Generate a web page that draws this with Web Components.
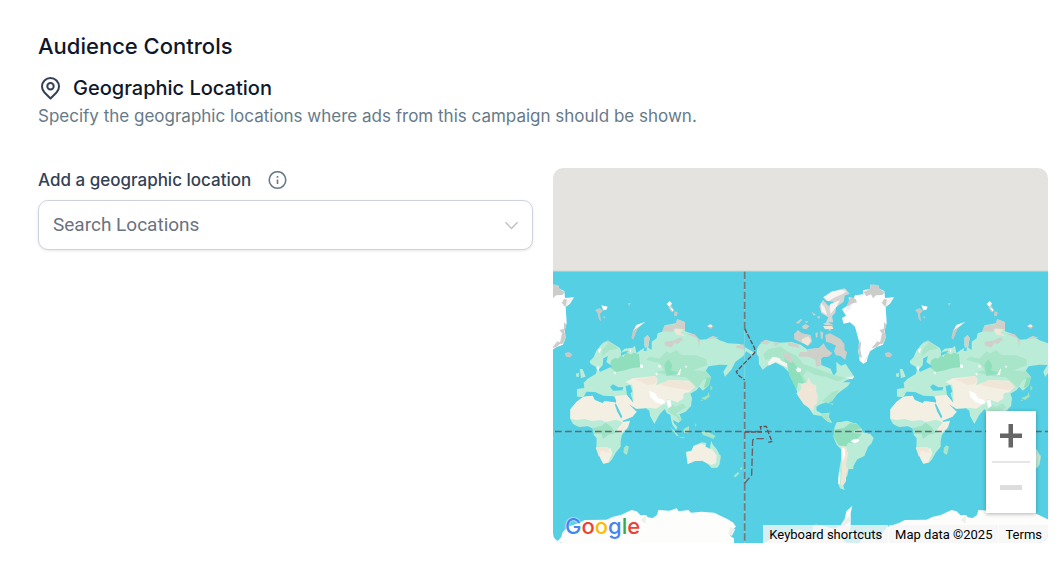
<!DOCTYPE html>
<html lang="en">
<head>
<meta charset="utf-8">
<meta name="viewport" content="width=device-width, initial-scale=1">
<title>Audience Controls</title>
<style>
body{margin:0;background:#fff;font-family:Inter,"Liberation Sans",sans-serif;color:#0f172a}
</style>
</head>
<body>
<audience-controls>
  <section-heading slot="heading">
    <span slot="title">Audience Controls</span>
    <span slot="subtitle">Geographic Location</span>
    <span slot="description">Specify the geographic locations where ads from this campaign should be shown.</span>
  </section-heading>
  <location-field slot="field" label="Add a geographic location" placeholder="Search Locations"></location-field>
  <world-map slot="map"></world-map>
</audience-controls>

<script>
const define = (name, html, setup) => {
  const template = document.createElement('template');
  template.innerHTML = html;
  customElements.define(name, class extends HTMLElement {
    constructor() {
      super();
      this.attachShadow({ mode: 'open' }).append(template.content.cloneNode(true));
    }
    connectedCallback() { if (setup) setup(this, this.shadowRoot); }
  });
};

define('audience-controls', `
<style>
:host{display:block;padding:32px 12px 18px 38px}
.columns{display:grid;grid-template-columns:minmax(0,1fr) minmax(0,1fr);gap:20px;margin-top:38px;align-items:start}
@media (max-width:640px){.columns{grid-template-columns:minmax(0,1fr)}}
</style>
<main><slot name="heading"></slot><div class="columns"><slot name="field"></slot><slot name="map"></slot></div></main>`);

define('section-heading', `
<style>
:host{display:block}
h2,h3,p{margin:0}
h2{font-size:22px;line-height:28px;font-weight:500}
h3{font-size:20px;line-height:28px;font-weight:500}
.row{display:flex;align-items:center;gap:10px;margin-top:14px}
svg{width:25px;height:25px;flex:none}
p{font-size:17px;line-height:28px;color:#667a88}
</style>
<h2><slot name="title"></slot></h2>
<div class="row">
<svg viewBox="0 0 25 25" fill="none" stroke="#334155" stroke-width="2" stroke-linejoin="round" aria-hidden="true"><path d="M12.5 22.500L6.500 16.500A8.500 8.500 0 0 1 4 10.500A8.500 8.500 0 0 1 21 10.500A8.500 8.500 0 0 1 18.500 16.500Z"/><circle cx="12.500" cy="10.200" r="3.200"/></svg>
<h3><slot name="subtitle"></slot></h3></div>
<p><slot name="description"></slot></p>`);

define('location-field', `
<style>
:host{display:block}
.label{display:flex;align-items:center;gap:16px;height:25px}
label{font-size:17px;line-height:25px;font-weight:500;color:#334155}
.info{border:0;background:none;padding:0;display:flex}
.info svg{width:20px;height:20px}
.box{display:flex;align-items:center;box-sizing:border-box;height:50px;margin-top:7px;padding:0 13px 0 14px;border:1px solid #cfd3de;border-radius:10px;box-shadow:0 1px 3px #0000001a;background:#fff}
input{flex:1;min-width:0;border:0;outline:0;padding:0;background:none;font:19px/28px Roboto,sans-serif;color:#334155}
input::placeholder{color:#6b7280;opacity:1}
.box svg{width:15px;height:15px;flex:none}
</style>
<div class="label"><label for="q"></label>
<button class="info" type="button" aria-label="More information"><svg viewBox="0 0 20 20" fill="none" stroke="#667a88" stroke-width="1.600"><circle cx="10.500" cy="9" r="8.300"/><path d="M10.500 8.500V13M10.500 5V6.800"/></svg></button></div>
<div class="box"><input id="q" type="text" role="combobox" aria-expanded="false" autocomplete="off">
<svg viewBox="0 0 15 15" fill="none" stroke="#bfbfbf" stroke-width="1.300" aria-hidden="true"><path d="M1.500 4.300L7.500 10.500L13.500 4.300"/></svg></div>`,
(host, root) => {
  root.querySelector('label').textContent = host.getAttribute('label');
  root.querySelector('input').placeholder = host.getAttribute('placeholder');
});

define('map-zoom', `
<style>
:host{display:block;width:50px;background:#fff;box-shadow:0 1px 4px #0000004d}
button{display:flex;align-items:center;justify-content:center;width:100%;height:50px;border:0;background:none;padding:0}
svg{width:24px;height:24px}
hr{margin:0 6px;border:0;height:2px;background:#e6e6e6}
</style>
<button type="button" aria-label="Zoom in"><svg viewBox="0 0 24 24" fill="#666"><path d="M9.500 0H14V9.500H23V14H14V23.500H9.500V14H1V9.500H9.500Z"/></svg></button>
<hr>
<button type="button" aria-label="Zoom out" disabled><svg viewBox="0 0 24 24" fill="#ddd"><path d="M1 9H23V14H1Z"/></svg></button>`);

define('map-credits', `
<style>
:host{display:flex;gap:1px;font:13px/16px Roboto,sans-serif;color:#000}
a,button,span{font:inherit;color:inherit;text-decoration:none;border:0;margin:0;padding:2px 6px 0;background:#f5f5f5cc;white-space:nowrap}
</style>
<button type="button">Keyboard shortcuts</button><span>Map data ©2025</span><a href="#terms">Terms</a>`);

define('world-map', `
<style>
:host{display:block;position:relative;height:375px;border-radius:10px;overflow:hidden;background:#e5e3df}
.map{display:block;width:100%;height:100%}
map-zoom{position:absolute;right:12px;bottom:30px}
map-credits{position:absolute;right:0;bottom:0}
.logo{position:absolute;left:12px;bottom:2px;font:500 22px/30px Inter,sans-serif;text-decoration:none;color:#4285f4;text-shadow:0 0 1px #fff,0 0 2px #fff}
.r{color:#ea4335}.y{color:#fbbc04}.g{color:#34a853}
</style>
<svg class="map" viewBox="0 -306 1485 1125" preserveAspectRatio="xMidYMid slice" role="img" aria-label="World map">
<defs>
<g id="world">
 <!-- Europe and Asia -->
 <path fill="#bbecd8" d="M72 380V357L94 354L92 339L104 326L128 312L132 300L128 290L113 282L110 274L122 262L130 242L143 226L150 219L166 212L180 221L201 234L205 247L214 236L239 233L246 227L250 249L263 240L274 234V203L284 195L290 203L286 233L296 240V215L311 205L314 190L328 185L335 166L369 160L373 148L396 156V184L422 193L440 209L461 208L478 199L500 211L525 220L561 222L580 234L602 247L598 256L580 244L571 258L547 276L536 298L516 320L511 305L524 285L500 284L467 289L458 302L474 321L468 345L450 362L438 350L431 360L412 371L417 384L414 408L398 425L379 433L386 448L376 459L361 450L362 459L373 471L369 480L357 462L352 435L342 430L335 417L320 433L304 462L291 437L289 422L278 415L250 416L228 403L232 412L251 425L238 440L208 452L186 405L190 392L183 379L151 377L126 366L100 365L91 381Z"/>
 <path fill="#a9e5c9" d="M290 260L320 266L340 244L352 250L370 240L385 255L430 256L460 268L462 285L420 301L458 304L474 322L450 330L435 354L400 322L350 317L308 306L335 301L320 280L280 270ZM150 236L168 217L198 235L170 241L145 260ZM370 430L400 412L390 400L368 410L350 400L345 425L370 440L380 456L386 448Z"/>
 <path fill="#8fdfbd" d="M170 292L174 272L186 263L196 266L203 257L212 261L218 246L235 254L240 248L258 252L262 292L238 294L219 300L190 306ZM334 285L346 268L358 286L354 301L378 310L340 318ZM461 323L474 322L465 350L452 354Z"/>
 <path fill="#54cfe4" d="M151 265L165 258L160 276L177 289L162 296L142 305L136 300L149 286ZM171 350L180 343L196 352L211 351L208 361L180 362ZM218 348L232 345L238 365L232 370L241 398L231 402L222 375ZM272 242L277 220L283 223L280 244ZM203 249L212 245L228 242L219 249L205 258Z"/>
 <path fill="#f4efe3" d="M217 336L240 325L306 318L314 327L310 346L350 330L407 332L425 351L409 367L392 370L390 386L374 397L345 388L335 400L310 416L288 413L250 416L228 403L251 425L238 440L208 452L186 405L190 392L185 378L222 375L241 398L241 370L238 346Z"/>
 <path fill="#f0e6d7" d="M245 329L305 318L314 327L305 342L285 346L265 336ZM320 344L350 329L414 337L425 352L408 361L380 357L350 351ZM363 176L392 174L382 190L400 199L368 193Z"/>
 <path fill="#d0d0cb" d="M328 184L334 167L367 163L373 147L396 157V178L365 175L360 185ZM333 216L364 211L382 202L390 208L375 221L364 220L355 233L336 226ZM276 234L275 203L284 195L290 206L284 231ZM144 221L165 211L174 220L160 216ZM460 208L481 197L498 205L480 205ZM396 190L424 192L440 209V232L432 205ZM550 227L571 222L576 239L549 233Z"/>
 <path fill="#fff" d="M288 363L306 369L315 384L332 390L338 400L325 403L307 396L292 380ZM340 392L352 389L356 408L346 415ZM262 282L270 286L269 295L261 292ZM316 284L326 289L318 294ZM372 316L384 293L381 315ZM131 291L139 289L136 305ZM135 241L145 233L140 250ZM229 240L235 238L233 248ZM307 309L313 308L312 318ZM395 289L403 287L399 294ZM181 306L188 307L187 314Z"/>
 <path fill="#bbecd8" d="M80 296L89 298L98 320L84 324ZM69 311L78 308L77 321L70 320Z"/>
 <path fill="#9fe2c2" d="M472 346L479 354L473 362ZM467 365L470 380L456 390L444 385L464 376ZM425 459L431 465L427 470ZM443 389L451 390L445 394Z"/>
 <path fill="#c8c9c6" d="M126 120L140 114L150 122L141 132L144 154L137 147L134 129ZM150 139L158 141L154 146ZM225 99L233 99L228 109ZM346 113L356 106L362 122L355 126ZM364 123L374 127L372 139L363 137ZM235 204L240 181L252 164L269 162L253 178L241 208L244 211ZM36 249L48 246L57 254L51 262L39 260ZM461 168L471 163L482 169L473 177Z"/>
 <path fill="#fff" d="M145 106L164 110L160 119L151 121ZM341 102L350 93L357 101L349 111ZM350 111L362 119L359 125ZM243 180L250 165L278 155L264 165ZM464 169L474 163L477 171Z"/>
 <!-- Africa and Indian Ocean -->
 <path fill="#bbecd8" d="M52 418L71 395L91 380L119 377L125 390L149 400L154 394L185 397L207 451L211 456L231 452L226 472L207 494L203 514L203 530L188 548L178 567L168 578L151 581L143 568L130 536L131 505L122 494L120 476L105 469L78 471L60 462L52 447Z"/>
 <path fill="#f4efe3" d="M52 418L71 395L91 380L119 377L125 390L149 400L154 394L185 397L207 451L211 456L231 452L222 475L202 489L192 480L209 457L190 449L158 456L145 450L117 453L95 447L73 450L52 446ZM128 533L147 532L151 541L172 534L178 550L166 577L151 581Z"/>
 <path fill="#f0e6d7" d="M129 532L164 531L170 549L145 542L137 560ZM198 487L216 462L206 485Z"/>
 <path fill="#9de3c3" d="M118 475L145 467L158 458L175 470L188 489L166 494L150 507L146 491L123 492Z"/>
 <path fill="#54cfe4" d="M185 402L190 403L208 440L204 445L193 425Z"/>
 <path fill="#a9e5c9" d="M213 533L220 526L228 530L222 554L215 552L211 546ZM351 470L365 482L378 499L370 497ZM391 478L408 468V487L394 490ZM445 486L464 485L487 497L482 507L470 502L450 495ZM376 501L397 502L390 505Z"/>
 <!-- Australia and New Zealand -->
 <path fill="#bbecd8" d="M398 546L415 542L422 527L446 517L460 519L457 529L471 536L474 512L480 524L491 538L502 558L500 583L493 593L476 594L465 583L448 572L426 573L404 582Z"/>
 <path fill="#f4efe3" d="M401 546L416 542L422 529L443 522L458 525L457 531L472 538L477 537L491 557L489 580L475 585L448 572L426 573L404 582Z"/>
 <path fill="#a9e5c9" d="M560 596L569 590L565 601ZM541 619L554 607L560 609L548 622ZM501 553L504 560L501 575Z"/>
 <!-- North America, Greenland and South America -->
 <g transform="translate(501 0)">
 <path fill="#bbecd8" d="M111 237L118 224L136 209L153 214L177 218L215 216L242 224L264 240L297 234L320 238L334 252L303 263L304 285L332 296L341 318L350 305L349 276L363 287L377 282L387 297L404 322L381 330L368 337L391 337L384 348L352 371L336 394L320 396L298 404L289 411L290 422L307 431L329 428L326 441L337 459L323 455L304 438L280 434L265 412L251 400L236 379L224 344L206 306L190 290L167 278L143 287L128 299L117 283L116 260L110 252Z"/>
 <path fill="#a9e5c9" d="M130 252L145 238L181 229L205 247L230 257L250 283L304 301L336 313L378 325L352 334L316 320L287 315L260 302L249 317L266 347L245 338L220 310L195 289L170 262L135 270ZM307 394L337 365L358 360L335 394ZM306 430L329 428L324 445L333 458L323 455L304 437Z"/>
 <path fill="#8fdfbd" d="M193 262L202 274L214 268L231 290L247 326L254 342L234 338L230 360L208 317L204 295L195 280Z"/>
 <path fill="#f0e6d7" d="M229 370L244 357L242 343L261 337L265 322L276 341L289 346L288 365L294 377L290 402L281 408L282 420L267 414L251 403L242 390ZM250 392L264 397L284 431L266 411Z"/>
 <path fill="#d0d0cb" d="M264 237L297 233L311 220L319 235L337 250L325 260L309 261L300 271L303 286L289 290L286 270L269 261L235 260L239 246L261 246ZM316 195L330 190L346 199L361 206L373 222L374 240L381 247L376 270L361 258L347 256L342 243L348 227L330 218L318 216ZM120 219L136 209L150 217L142 224ZM160 220L180 216L168 230ZM203 217L235 222L239 234L205 227ZM185 253L207 247L219 274L211 280L198 264ZM222 192L234 180L246 190L272 195L276 216L265 227L238 215L223 208ZM227 159L243 146L246 151L235 161ZM246 169L257 162L268 169L259 178L249 176ZM253 155L265 152L261 159ZM275 125L288 134L281 137ZM290 140L301 138L297 147ZM286 190L293 186V200L288 204ZM301 183L310 188L307 209L302 203ZM325 177L334 174L330 185ZM495 251L504 247L517 253L510 262L498 258Z"/>
 <path fill="#f0e6d7" d="M245 208L265 199L274 211L263 227L246 217ZM309 168L337 168L340 177L315 178Z"/>
 <path fill="#d5d6d3" d="M310 82L334 65L374 55L389 71L374 77L371 95L348 112L346 128L336 139L340 157L318 157L325 142L304 130L298 109L309 90L326 108L343 96L318 92ZM309 161L323 156L341 166L318 166Z"/>
 <path fill="#f5f5f3" d="M310 82L335 65L364 59L380 63L368 72L342 83L325 94ZM302 98L314 112L321 135L305 125ZM331 102L360 91L349 111L332 132L329 118ZM144 278L158 260L178 264L186 274L201 280L203 293L185 284L167 275L146 287ZM231 292L244 296L242 306L233 307L228 301ZM376 323L402 319L397 328ZM271 357L275 360L269 362Z"/>
 <path fill="#fff" d="M366 118L381 108L388 95L386 81L400 86L405 76L430 73L429 61L450 57L451 44L474 45L478 56L493 63L495 84L522 82L510 101L497 111L500 160L494 181L497 203L489 224L470 231L450 244L443 262L440 275L430 281L419 272L415 243L419 221L412 196L405 170L390 157L371 161L366 144L378 137Z"/>
 <path fill="#cccdca" d="M430 66L450 57L451 44L474 45L478 56L494 66L488 75L468 76L459 85L453 73L439 79ZM493 86L504 90L496 111L485 98ZM493 155L499 164L493 184L497 205L489 221L479 222L486 190L478 180L491 177ZM391 80L407 87L411 97L395 101L388 111L380 109ZM415 222L424 213L421 240L426 263L417 261ZM472 214L484 218L470 231L455 235Z"/>
 <path fill="#f0f0ee" d="M500 91L519 85L506 101L498 109ZM379 112L396 101L391 116L376 128ZM438 261L443 256L440 271L431 278Z"/>
 <path fill="#a9e5c9" d="M305 390L321 390L333 401L321 399ZM329 400L341 401L337 405Z"/>
 <path fill="#bbecd8" d="M343 474L350 457L362 456L381 452L401 459L409 460L425 476L428 487L451 492L461 504L455 520L444 531L433 558L412 568L400 589L400 597L386 597L382 617L372 631L369 645L374 660L360 655L354 639L357 602L363 569V538L350 524L340 500Z"/>
 <path fill="#8fdfbd" d="M343 479L372 474L391 459L412 462L424 476L405 480L402 489L426 491L415 504L398 519L385 518L377 530L355 525L341 500Z"/>
 <path fill="#f0e6d7" d="M365 528L378 530L384 550L378 587L384 597L378 615V634L367 650L362 642L366 610Z"/>
 <path fill="#fff" d="M367 534L374 536L375 555L368 576ZM357 605L361 608L360 640L354 642ZM391 515L400 508L415 507L418 513L406 520Z"/>
 </g>
 <!-- Antarctica -->
 <path fill="#fdfdfc" d="M0 804L15 812L25 801L28 788L44 770L78 759L95 750L160 749L180 740L203 735L236 720L251 724L262 735L279 735L284 742L299 744L312 735L316 720L350 722L371 715L377 724L406 720L414 728L446 725L484 728L510 741L523 747L541 758L549 770L536 780L532 798L543 805V850H0Z"/>
 <path fill="#fdfdfc" d="M630 850V820L669 799L718 783L740 779L790 801L824 796L862 801L880 818L919 820L931 798L945 790L960 805V850Z"/>
 <path fill="#fdfdfc" d="M775 792L782 765L790 764L797 765L842 776L861 769L875 747L880 724L898 707L893 730V770L889 783L914 793L890 802Z"/>
 <path fill="#eeeeec" d="M263 750L280 735L277 761ZM860 770L876 749L887 740L894 747L887 760ZM532 771L547 777L537 798L526 792ZM782 764L804 768L815 780L780 776Z"/>
</g>
</defs>
<path fill="#54cfe4" d="M-2000 5H4000V900H-2000Z"/>
<path stroke="#8bbcc5" stroke-width="2" d="M-2000 4H4000"/>
<use href="#world" x="-960"/><use href="#world"/><use href="#world" x="960"/>
<g fill="none" stroke="#74787b" stroke-width="5">
<path stroke="#8bd9e3" stroke-width="2" d="M575 5V850"/>
<path stroke="#66696c" stroke-width="4" stroke-dasharray="20 10" d="M-954 484.500H2400"/>
<path stroke-dasharray="22 8" d="M575 5V176"/>
<path stroke="#6d4c55" stroke-width="4" stroke-dasharray="14 5" d="M575 176L605 235V248L550 305L555 315L575 330"/>
<path stroke-dasharray="22 8" d="M575 335V640M575 640V850"/>
<path stroke="#6d5c63" stroke-width="4" stroke-dasharray="22 8" d="M575 640L596 615L599 510L606 506H641"/>
<path stroke="#6d4c55" stroke-width="4" stroke-dasharray="14 5" d="M575 486H625L622 470L640 469L646 487L655 510L658 514L646 517"/>
</g>
</svg>
<a class="logo" href="#google" aria-label="Google">G<span class="r">o</span><span class="y">o</span>g<span class="g">l</span><span class="r">e</span></a>
<map-zoom></map-zoom><map-credits></map-credits>`);
</script>
</body>
</html>
